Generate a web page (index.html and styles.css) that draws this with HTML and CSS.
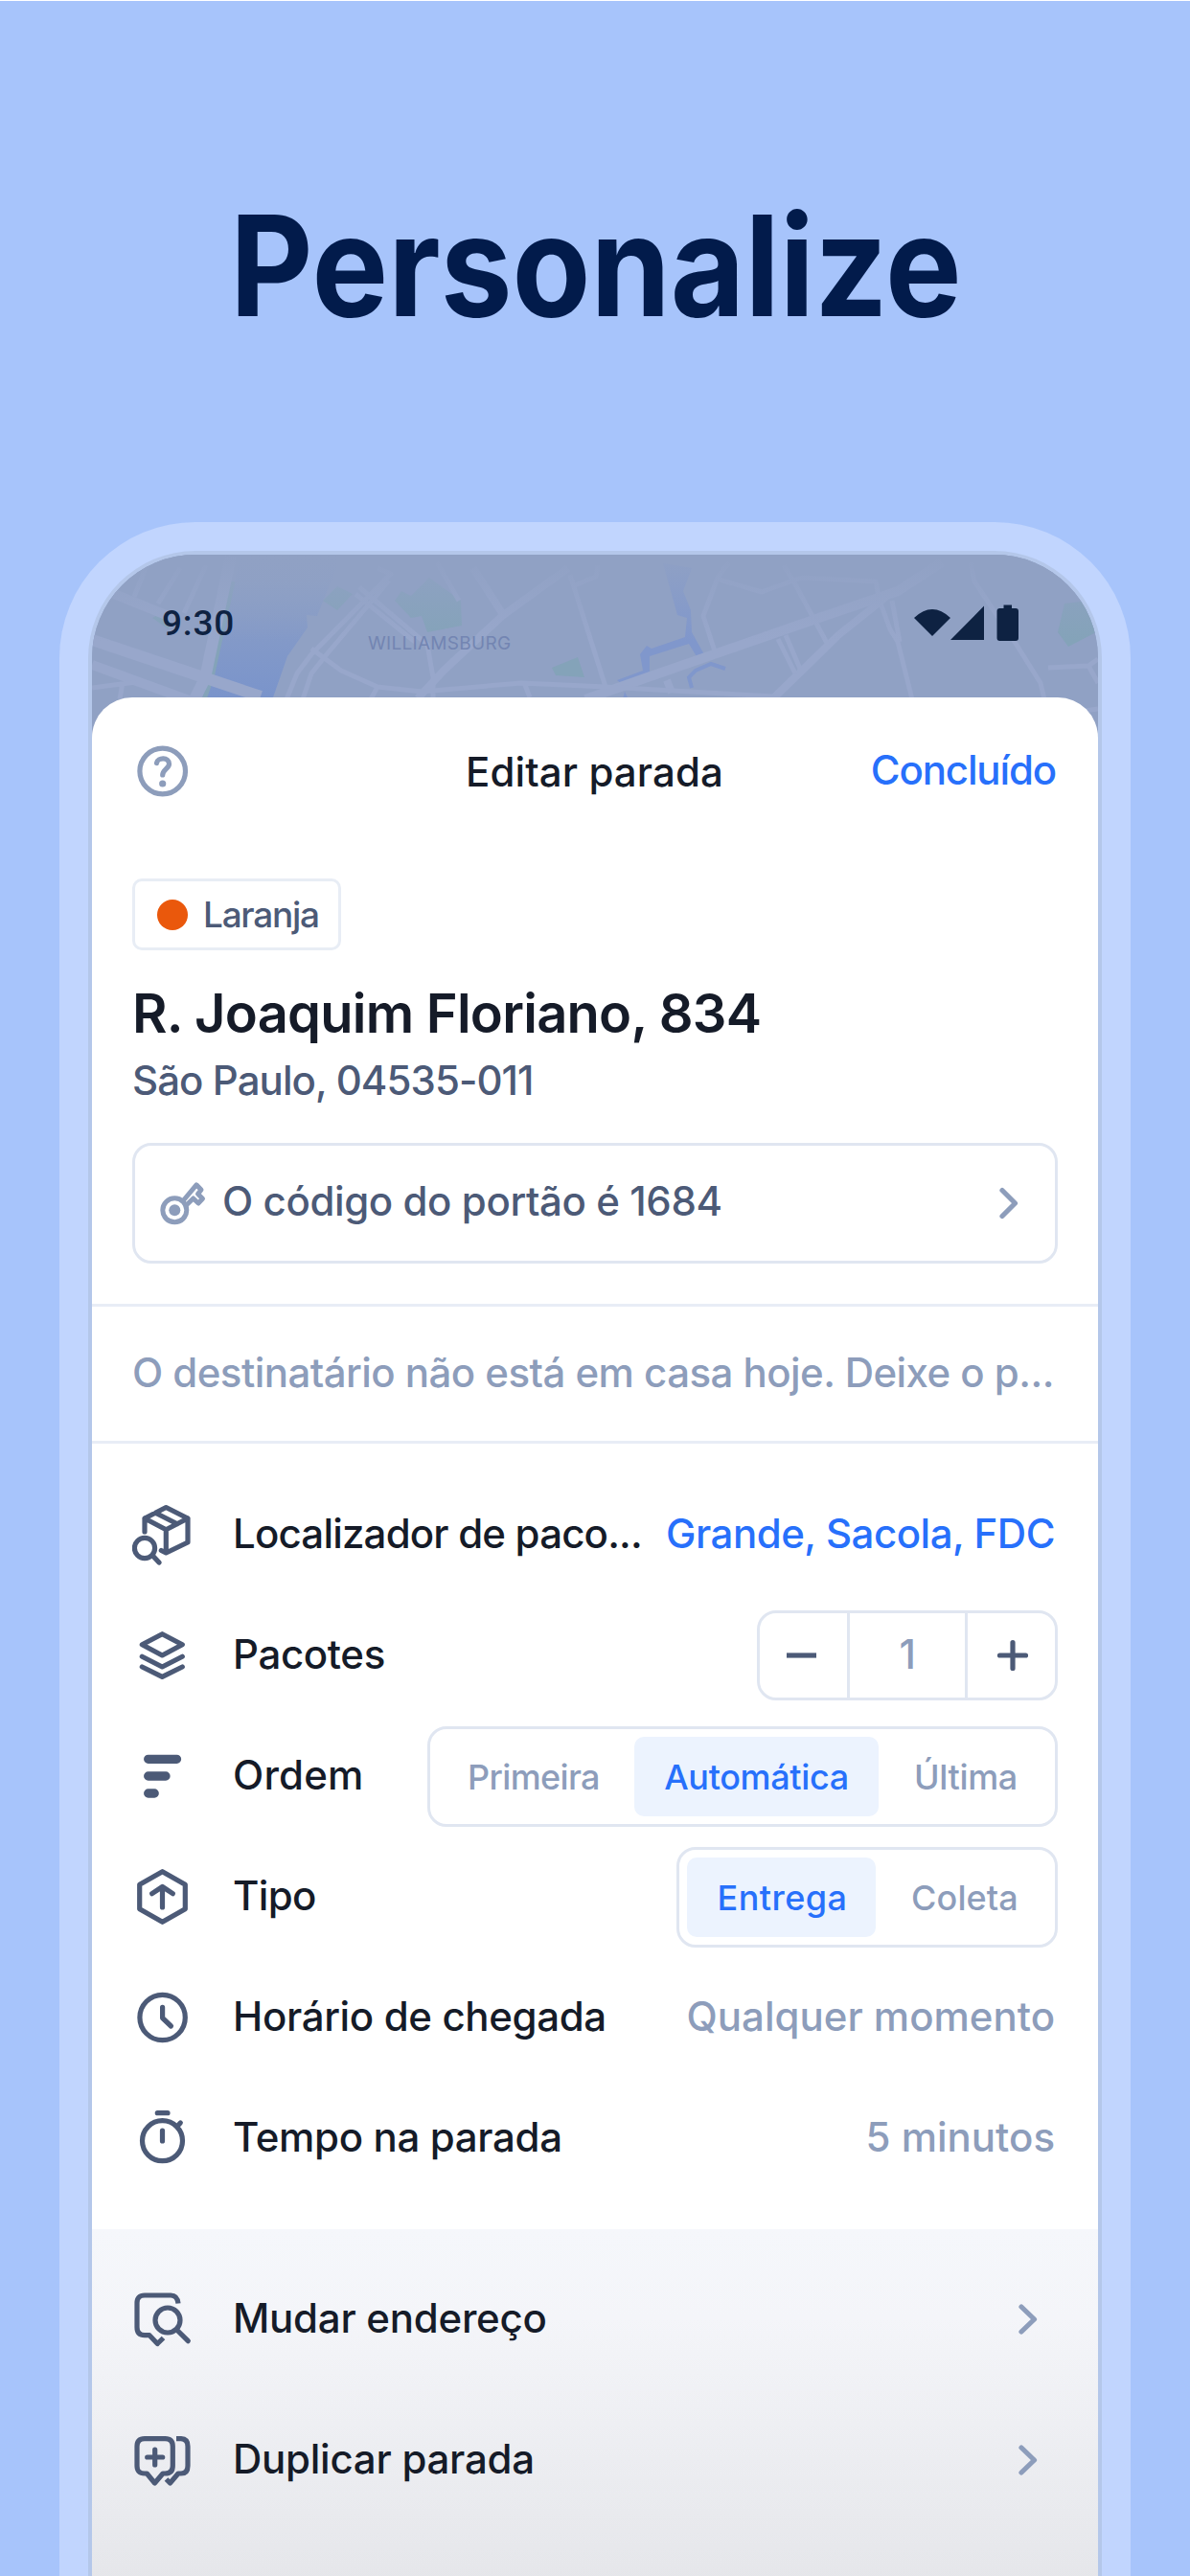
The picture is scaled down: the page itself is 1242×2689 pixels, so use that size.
FILE: index.html
```html
<!DOCTYPE html>
<html lang="pt-BR">
<head>
<meta charset="utf-8">
<title>Editar parada</title>
<link rel="stylesheet" href="styles.css">
</head>
<body>
<main class="page">
  <h1 class="headline">Personalize</h1>
  <div class="phone"><div class="bezel"><div class="screen">
    <svg class="map" viewBox="96 579 1050 201">
      <defs>
        <linearGradient id="river" x1="0" y1="0" x2="0" y2="1"><stop offset="0" stop-color="#90a1c4"/><stop offset="1" stop-color="#7a94cb"/></linearGradient>
        <linearGradient id="fade" x1="0" y1="0" x2="0" y2="1"><stop offset="0" stop-color="#90a1c4"/><stop offset="1" stop-color="#90a1c4" stop-opacity="0"/></linearGradient>
      </defs>
      <rect class="land" x="96" y="579" width="1050" height="201"/>
      <path fill="url(#river)" d="M251 579L240 630L219 707L213 728H285L300 685L321 655L320 642L331 643L352 590V579Z"/>
      <path class="park" d="M337 627L352 612L368 620L352 637ZM412 627L419 617L429 622L448 603L481 627L482 653L446 660L440 643L429 645ZM576 697L603 686L610 707L580 705ZM159 645L166 641L178 650L176 657ZM1111 630L1136 627L1144 660L1115 675L1104 660Z"/>
      <path class="park-edge" d="M243 607L221 707L213 730"/>
      <path class="creek" d="M692 588L722 593L713 617L721 637L722 660L736 685L728 687L719 672L678 685V702L650 715L644 710L671 700L668 683L675 674L680 677L715 665L717 645L707 642ZM652 722L656 730H650Z"/>
      <path class="creek-line" d="M757 698L742 693L726 700L719 707L722 718"/>
      <g class="road">
        <path stroke-width="12" d="M96 668L272 727M241 580L214 708L203 730"/>
        <path stroke-width="10" d="M96 694L200 732M119 620L176 643M611 730L676 707L849 647L937 617L983 587"/>
        <path stroke-width="8" d="M436 729L463 700L524 643L593 593M494 593L524 640M807 729L837 700L875 663L925 623M696 710L701 723"/>
        <path stroke-width="5" d="M188 593L165 630M153 590L140 623M215 590L192 640M96 718L142 712M128 712L125 730M394 593L408 599L325 683L310 703L299 730M406 606L341 683L325 703L316 730M375 613L446 673L452 707V730M371 620L433 670M325 677L356 700L394 717L440 722L544 713L632 717L807 727M394 717L387 730M456 587L479 627M595 600L632 717M624 590L622 602L597 612M548 715L553 728M818 590L830 610L864 673M761 587L749 603L734 643L747 683M751 605L795 618L822 608L837 603L914 607L918 627M812 667L830 703M820 663L835 698M918 627L929 657L937 670L952 730M931 627L939 670M1013 587L1017 607L1059 670L1086 713L1090 730M1094 697L1136 695L1146 688M1136 695L1146 713M1132 742L1146 740"/>
      </g>
      <rect fill="url(#fade)" x="96" y="579" width="1050" height="90"/>
      <text class="place" x="384" y="678">WILLIAMSBURG</text>
    </svg>
    <div class="status">
      <span class="time">9:30</span>
      <svg class="signals" width="110" height="40" viewBox="954 631 110 40"><path d="M954 646Q973 628 992 646L973 665ZM992 669L1027 633.5V669ZM1047.500 632.500H1056V636H1060Q1063 636 1063 639V667Q1063 670 1060 670H1043.500Q1040.500 670 1040.500 667V639Q1040.500 636 1043.500 636H1047.500Z"/></svg>
    </div>
    <section class="sheet">
      <header class="bar">
        <svg class="line-icon muted" width="64" height="64" viewBox="0 0 64 64"><circle cx="31.700" cy="32" r="23.800"/><path d="M25.500 23.500C26.500 17.500 38.500 17 38.500 24.500C38.500 29 31.700 30.500 31.700 36"/><circle class="dot" cx="31.700" cy="45" r="3.600"/></svg>
        <span class="title">Editar parada</span>
        <span class="done">Concluído</span>
      </header>
      <div class="stop">
        <div class="chip"><i></i><span>Laranja</span></div>
        <h2>R. Joaquim Floriano, 834</h2>
        <p class="city">São Paulo, 04535-011</p>
        <div class="gate">
          <svg class="line-icon muted key" width="50" height="50" viewBox="0 0 50 50"><circle cx="15.300" cy="30.300" r="12.500"/><circle class="dot" cx="15.300" cy="30.300" r="6"/><path d="M24.500 20L38 3.800L43 9L39.500 13.300L44.500 18.300L40 23L34.700 18L27 25.500"/></svg>
          <span class="gate-text">O código do portão é 1684</span>
          <svg class="line-icon muted chev" width="20" height="34" viewBox="0 0 20 34"><path d="M3 3.500L16.500 17L3 30.500"/></svg>
        </div>
      </div>
      <p class="note">O destinatário não está em casa hoje. Deixe o p...</p>
      <div class="rows">
        <div class="row">
          <svg class="line-icon" width="64" height="64" viewBox="0 0 64 64"><path d="M13 29V15L35.300 3.500L58 15V40L35.300 51L30.300 48.500M13 15L35.300 26.700L58 15M35.300 26.700V50M24.300 9.300L47 20.700"/><circle cx="13" cy="46" r="10.600"/><path d="M21.500 54L28 61"/></svg>
          <span class="label finder">Localizador de paco...</span><span class="value link">Grande, Sacola, FDC</span>
        </div>
        <div class="row">
          <svg class="line-icon" width="64" height="64" viewBox="0 0 64 64"><path d="M31.300 9.700L52.300 20.700L31.300 32L10.300 20.700ZM10.300 33.300L31.300 44L52.300 33.300M10.300 44L31.300 54.300L52.300 44"/></svg>
          <span class="label">Pacotes</span>
          <div class="stepper">
            <b><svg class="line-icon" width="34" height="34" viewBox="0 0 34 34"><path stroke-linecap="butt" d="M1 17H32"/></svg></b>
            <span>1</span>
            <b><svg class="line-icon" width="34" height="34" viewBox="0 0 34 34"><path d="M3.500 17H30.500M17 3.500V30.500"/></svg></b>
          </div>
        </div>
        <div class="row">
          <svg class="line-icon" width="64" height="64" viewBox="0 0 64 64"><path stroke-width="9.300" d="M16.700 14.300H46.500M16.700 32H35M16.700 50H23.200"/></svg>
          <span class="label ordem">Ordem</span>
          <div class="segments order"><span>Primeira</span><span class="on">Automática</span><span>Última</span></div>
        </div>
        <div class="row">
          <svg class="line-icon" width="64" height="64" viewBox="0 0 64 64"><path d="M31.500 5.700L55.300 19.300V44.700L31.500 58.300L7.700 44.700V19.300ZM20.700 28.700L31.500 21.500L42.300 28.700M31.500 22V43"/></svg>
          <span class="label tipo">Tipo</span>
          <div class="segments type"><span class="on">Entrega</span><span>Coleta</span></div>
        </div>
        <div class="row">
          <svg class="line-icon" width="64" height="64" viewBox="0 0 64 64"><circle cx="31.600" cy="32" r="23.700"/><path d="M31.600 21.300V32.500L40.500 41"/></svg>
          <span class="label">Horário de chegada</span><span class="value">Qualquer momento</span>
        </div>
        <div class="row">
          <svg class="line-icon" width="64" height="64" viewBox="0 0 64 64"><circle cx="31.500" cy="34.700" r="21"/><path d="M26.300 5.700H37M31.500 24V35M47.500 19L50.300 16"/></svg>
          <span class="label">Tempo na parada</span><span class="value">5 minutos</span>
        </div>
      </div>
      <div class="actions">
        <div class="row">
          <svg class="line-icon" width="64" height="64" viewBox="0 0 64 64"><path stroke-linecap="butt" d="M48 15.500Q47 7 40.300 7H13Q5 7 5 15V40.300Q5 48.700 13 48.700H18L26.300 57.500L32.500 51.500"/><circle cx="37" cy="33" r="13"/><path d="M47 43.500L58.300 54.700"/></svg>
          <span class="label">Mudar endereço</span>
          <svg class="line-icon muted chev" width="20" height="34" viewBox="0 0 20 34"><path d="M3 4L16.500 17L3 30"/></svg>
        </div>
        <div class="row">
          <svg class="line-icon" width="64" height="64" viewBox="0 0 64 64"><path d="M13 9.700H34.300Q42.300 9.700 42.300 17.700V38Q42.300 46 34.300 46H32L23.500 56L15.300 46H13Q5 46 5 38V17.700Q5 9.700 13 9.700ZM15.700 29H31.700M23.700 21V37"/><path stroke-linecap="butt" d="M46 9.700H51Q58 10 58 17.700V38Q58 46 51 46H48L39.500 56L35.500 52"/></svg>
          <span class="label">Duplicar parada</span>
          <svg class="line-icon muted chev" width="20" height="34" viewBox="0 0 20 34"><path d="M3 4L16.500 17L3 30"/></svg>
        </div>
      </div>
    </section>
  </div></div></div>
</main>
</body>
</html>
```
FILE: styles.css
```css
* { box-sizing: border-box; }
body { margin: 0; background: #a7c4fb; font-family: Inter, "Liberation Sans", sans-serif; color: #151b28; }
h1, h2, p { margin: 0; }
svg { display: block; flex: none; }

.page { height: 2689px; overflow: hidden; border-top: 1px solid #fff; display: flex; flex-direction: column; align-items: center; }
.headline { margin-top: 176px; font-size: 146px; line-height: 200px; font-weight: 700; color: #021b4b; white-space: nowrap; transform: translateX(1px) scaleX(.916); }

.phone { width: 1118px; height: 2144px; flex: none; margin-top: 168px; padding: 30px 30px 0; background: #c1d5fe; border-radius: 142px 142px 0 0; }
.bezel { height: 100%; padding: 4px 4px 0; background: #b4c7ea; border-radius: 112px 112px 0 0; }
.screen { position: relative; height: 100%; overflow: hidden; background: #90a1c4; border-radius: 108px 108px 0 0; }

.map { position: absolute; top: 0; left: 0; width: 1050px; height: 201px; }
.land { fill: #90a1c4; }
.park { fill: #84a3b9; }
.park-edge { fill: none; stroke: #84a3b9; stroke-width: 5; }
.creek { fill: #8097cc; }
.creek-line { fill: none; stroke: #8097cc; stroke-width: 4; }
.road { fill: none; stroke: #98a7cb; stroke-linejoin: round; }
.place { font-size: 19px; letter-spacing: .3px; fill: #7385b2; }

.status { position: relative; height: 142px; margin-bottom: 7px; padding: 0 82px 0 73px; display: flex; align-items: center; justify-content: space-between; color: #0e2242; }
.time { padding-top: 1px; font: 500 37px Roboto, sans-serif; letter-spacing: .8px; }
.signals { fill: #0e2242; }

.sheet { position: relative; height: 1961px; background: #fff; border-radius: 42px 42px 0 0; overflow: hidden; font-size: 42px; font-weight: 500; line-height: 50px; white-space: nowrap; letter-spacing: -.35px; }
.line-icon { fill: none; stroke: #4c5a77; stroke-width: 5.2; stroke-linecap: round; stroke-linejoin: round; }
.line-icon .dot { fill: #4c5a77; stroke: none; }
.line-icon.muted { stroke: #8d9dbb; }
.muted .dot { fill: #8d9dbb; }

.bar { height: 154px; padding: 0 42px; display: grid; grid-template-columns: 1fr auto 1fr; align-items: center; }
.title { padding-top: 2px; letter-spacing: .1px; margin-left: -1px; }
.done { justify-self: end; padding: 0 2px 3px 0; color: #2770fb; letter-spacing: -1.13px; }

.stop { padding: 35px 42px 42px; display: flex; flex-direction: column; align-items: flex-start; }
.chip { height: 75px; width: 218px; padding: 0 0 0 23px; display: flex; align-items: center; gap: 16px; border: 3px solid #e8edf5; border-radius: 10px; font-size: 37px; color: #4c5a77; letter-spacing: -1.28px; }
.chip i { flex: none; width: 32px; height: 32px; border-radius: 50%; background: #ea580c; }
h2 { margin-top: 36px; font-size: 56px; line-height: 60px; font-weight: 600; letter-spacing: -.75px; }
.city { margin-top: 15px; color: #4c5a77; letter-spacing: -.93px; }
.gate { margin-top: 40px; width: 100%; height: 126px; padding: 0 38px 0 26px; display: flex; align-items: center; border: 3px solid #e0e6f1; border-radius: 20px; color: #4c5a77; }
.key { margin: 4px 15px 0 0; }
.line-icon.key { stroke-width: 5; }
.gate-text { padding-bottom: 4px; letter-spacing: -.4px; }
.chev { margin-left: auto; }

.note { height: 146px; padding: 0 42px; border: solid #e8edf6; border-width: 3px 0; line-height: 138px; color: #8d9dbb; letter-spacing: -.54px; }

.rows { padding: 32px 42px; }
.row { height: 126px; display: flex; align-items: center; }
.label { margin-left: 41px; padding-bottom: 3px; }
.finder { letter-spacing: -.81px; }
.ordem { letter-spacing: .18px; }
.tipo { letter-spacing: -.65px; }
.value { margin-left: auto; padding: 0 3px 3px 0; color: #8d9dbb; letter-spacing: 0; }
.link { color: #2770fb; letter-spacing: -.48px; }

.stepper { margin-left: auto; width: 314px; height: 94px; display: flex; border: 3px solid #e0e6f1; border-radius: 20px; color: #8d9dbb; }
.stepper b { width: 91px; display: flex; align-items: center; justify-content: center; }
.stepper b:first-child { padding-right: 3px; }
.stepper b:last-child { padding-left: 3px; }
.stepper span { flex: 1; border: solid #e0e6f1; border-width: 0 3px; text-align: center; line-height: 85px; }

.segments { margin-left: auto; height: 105px; padding: 8px; display: flex; border: 3px solid #e0e6f1; border-radius: 20px; font-size: 36px; color: #8d9dbb; }
.segments span { padding-top: 1px; display: flex; align-items: center; justify-content: center; flex: none; border-radius: 10px; }
.segments .on { background: #ecf3fe; color: #2770fb; }
.order { width: 658px; }
.order span:first-child { width: 205px; padding-right: 5px; letter-spacing: -.64px; }
.order .on { width: 255px; }
.order span:last-child { width: 176px; padding-left: 6px; }
.type { width: 398px; }
.type .on { width: 197px; padding-left: 2px; letter-spacing: .45px; }
.type span:last-child { width: 179px; padding-left: 7px; letter-spacing: .1px; }

.actions { height: 370px; padding: 20px 42px; background: linear-gradient(#f5f7fb 0, #f4f5f9 25%, #e5e6ea 100%); }
.actions .row { height: 147px; }
.actions .label { padding-bottom: 1px; letter-spacing: -.25px; }
.actions .chev { margin: 0 21px 0 auto; }
```
